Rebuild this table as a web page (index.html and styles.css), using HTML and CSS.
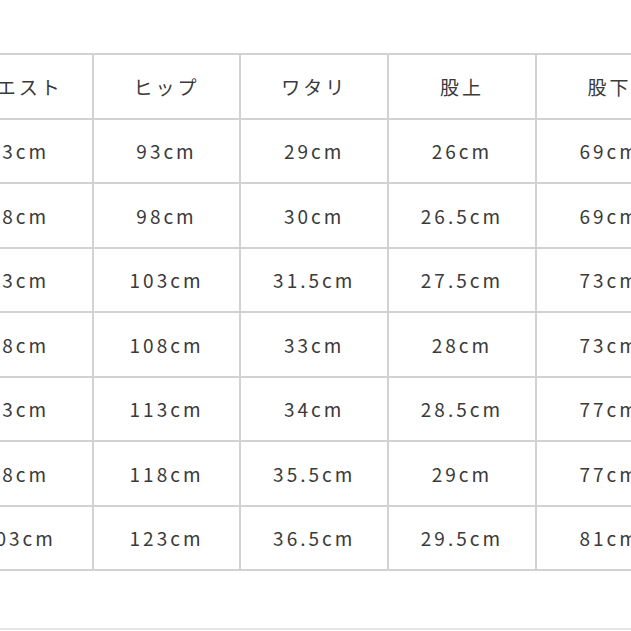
FILE: index.html
```html
<!DOCTYPE html>
<html lang="ja">
<head>
<meta charset="utf-8">
<link rel="stylesheet" href="styles.css">
</head>
<body>
<div class="page">
  <table class="size-table">
    <tr><td>ウエスト</td><td>ヒップ</td><td>ワタリ</td><td>股上</td><td>股下</td></tr>
    <tr><td>73cm</td><td>93cm</td><td>29cm</td><td>26cm</td><td>69cm</td></tr>
    <tr><td>78cm</td><td>98cm</td><td>30cm</td><td>26.5cm</td><td>69cm</td></tr>
    <tr><td>83cm</td><td>103cm</td><td>31.5cm</td><td>27.5cm</td><td>73cm</td></tr>
    <tr><td>88cm</td><td>108cm</td><td>33cm</td><td>28cm</td><td>73cm</td></tr>
    <tr><td>93cm</td><td>113cm</td><td>34cm</td><td>28.5cm</td><td>77cm</td></tr>
    <tr><td>98cm</td><td>118cm</td><td>35.5cm</td><td>29cm</td><td>77cm</td></tr>
    <tr><td>103cm</td><td>123cm</td><td>36.5cm</td><td>29.5cm</td><td>81cm</td></tr>
  </table>
  <div class="rule"></div>
</div>
</body>
</html>
```

FILE: styles.css
```css
html, body {
  margin: 0;
  padding: 0;
  background: #ffffff;
}
.page {
  width: 631px;
  height: 631px;
  overflow: hidden;
  position: relative;
  padding-top: 53px;
  box-sizing: border-box;
}
.size-table {
  border-collapse: collapse;
  table-layout: fixed;
  margin-left: -56px;
  width: 740px;
}
.size-table td {
  width: 145.7px;
  height: 62.5px;
  padding: 0;
  border: 2px solid #d2d2d2;
  text-align: center;
  vertical-align: middle;
  font-family: "Noto Sans CJK JP", "Noto Sans", sans-serif;
  font-size: 19px;
  letter-spacing: 3px;
  color: #3a3a3a;
  white-space: nowrap;
  overflow: hidden;
}
.rule {
  position: absolute;
  left: 0;
  right: 0;
  top: 628px;
  height: 2px;
  background: #e6e6e6;
}
```
